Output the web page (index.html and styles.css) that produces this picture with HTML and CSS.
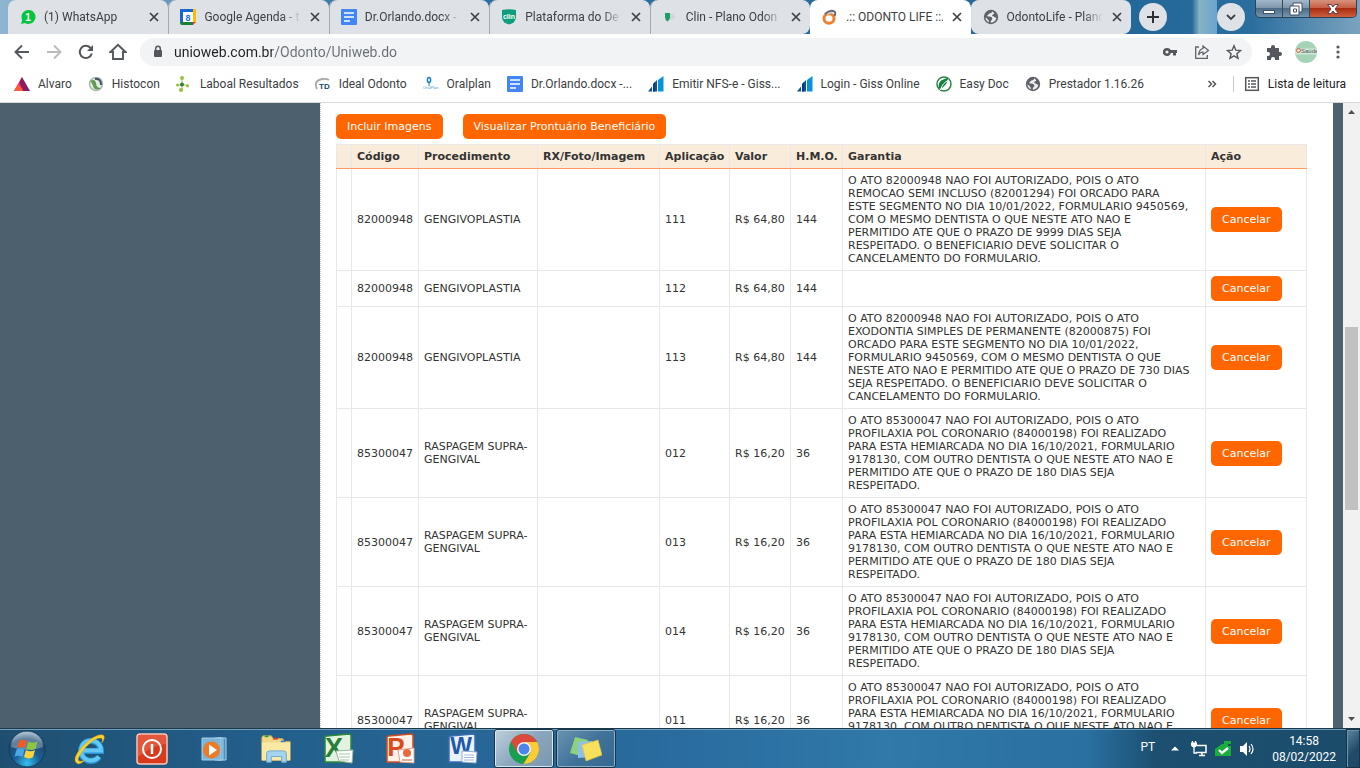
FILE: index.html
```html
<!DOCTYPE html>
<html lang="pt-BR">
<head>
  <meta charset="UTF-8" />
  <meta name="viewport" content="width=device-width, initial-scale=1.0"/>
  <title>.:: ODONTO LIFE ::.</title>
  <link rel="stylesheet" href="styles.css">
</head>
<body>
  <!-- shared shapes -->
  <svg class="defs" width="0" height="0" aria-hidden="true">
    <symbol id="docs" viewBox="0 0 16 16">
      <rect width="16" height="16" rx="1" fill="#4285f4"/>
      <path d="M3 4h10M3 8h10M3 12h6" stroke="#fff" stroke-width="1.6"/>
    </symbol>
    <symbol id="globe" viewBox="0 0 16 16">
      <circle cx="8" cy="8" r="7.2" fill="#5f6368"/>
      <path d="M9 2.500c-.2 1.600-1.200 1.800-2.500 2-.9.200-.8 1.300-1.700 1.600-.8.200-.6 1.300.2 1.500 1.700.3 3.800-.2 4.300 1.600.4 1.500-1 1.800-1.400 2.900l-.2 1.700c2.900-.2 5.300-2.300 5.700-5.100-1.700.3-2-1.200-3.600-1.400-.9-.1-.8-1.200.1-1.700l1.300-.9C10.700 3.400 10 2.700 9 2.500zM2.400 8.400c.1 1.900 1.500 3.900 3.400 4.800.4-1.300-.2-1.700-.8-2.400-.7-.8-.6-1.700-2.600-2.400z" fill="#eceef0"/>
    </symbol>
    <symbol id="giss" viewBox="0 0 16 16">
      <path d="M0 15.500l4-5v5zM5 15.500V8l4-4v11.500z" fill="#0d4fa0"/>
      <path d="M10 15.500V4l5.500-4v15.500z" fill="#0693d8"/>
      <path d="M7 6l-2 2.500v7h2z" fill="#083c80"/>
    </symbol>
    <symbol id="close" viewBox="0 0 12 12">
      <path d="M2 2l8 8M10 2l-8 8" stroke="#3c4043" stroke-width="1.700"/>
    </symbol>
  </svg>

  <header class="tabstrip">
    <nav class="tabs">
      <div class="tab first">
        <svg class="fav" viewBox="0 0 16 16"><path d="M1 15l1.200-4A7 7 0 1 1 5 14z" fill="#06c43e"/><text x="8" y="12" text-anchor="middle" font-size="10" font-weight="bold" fill="#fff">1</text></svg>
        <a href="#" class="tab-title">(1) WhatsApp</a>
        <button class="close" aria-label="Fechar"><svg><use href="#close"/></svg></button>
      </div>
      <div class="tab">
        <svg class="fav" viewBox="0 0 16 16"><path d="M0 0h13v3H3v10H0z" fill="#1967d2"/><path d="M13 0h3v13h-3z" fill="#fbbc04"/><path d="M0 13h13v3H2q-2 0-2-2z" fill="#188038"/><path d="M13 13h3l-3 3z" fill="#ea4335"/><path d="M3 3h10v10H3z" fill="#fff"/><text x="8" y="11.500" text-anchor="middle" font-size="9" font-weight="bold" fill="#1a73e8">8</text></svg>
        <a href="#" class="tab-title">Google Agenda - t</a>
        <button class="close" aria-label="Fechar"><svg><use href="#close"/></svg></button>
      </div>
      <div class="tab">
        <svg class="fav"><use href="#docs"/></svg>
        <a href="#" class="tab-title">Dr.Orlando.docx -</a>
        <button class="close" aria-label="Fechar"><svg><use href="#close"/></svg></button>
      </div>
      <div class="tab">
        <svg class="fav" viewBox="0 0 16 16"><path d="M1 1q7-1.500 14 0v8q-1 5-7 6.500Q2 14 1 9z" fill="#0c9e7c"/><text x="8" y="9.500" text-anchor="middle" font-size="7" font-weight="bold" fill="#fff">clin</text></svg>
        <a href="#" class="tab-title">Plataforma do De</a>
        <button class="close" aria-label="Fechar"><svg><use href="#close"/></svg></button>
      </div>
      <div class="tab last">
        <svg class="fav" viewBox="0 0 16 16"><path d="M3 4h5v5q-1 3-2.500 3.500Q3 11 3 8z" fill="#1e9d63"/><path d="M8 6h4M8 8h5M8 10h3" stroke="#c2c9c8"/></svg>
        <a href="#" class="tab-title">Clin - Plano Odon</a>
        <button class="close" aria-label="Fechar"><svg><use href="#close"/></svg></button>
      </div>
      <div class="tab active">
        <svg class="fav" viewBox="0 0 16 16"><ellipse cx="7" cy="9.500" rx="5" ry="4.800" fill="none" stroke="#f08030" stroke-width="3"/><path d="M3 5Q8 0 12.500 2.500q1.500 1.500 0 4.500" fill="none" stroke="#66696c" stroke-width="2"/><path d="M5 5.500q4-3 6-1" fill="none" stroke="#c5c8ca" stroke-width="1.500"/></svg>
        <a href="#" class="tab-title">.:: ODONTO LIFE ::.</a>
        <button class="close" aria-label="Fechar"><svg><use href="#close"/></svg></button>
      </div>
      <div class="tab last">
        <svg class="fav"><use href="#globe"/></svg>
        <a href="#" class="tab-title">OdontoLife - Plano</a>
        <button class="close" aria-label="Fechar"><svg><use href="#close"/></svg></button>
      </div>
    </nav>
    <button class="round" aria-label="Nova guia"><svg width="14" height="14" viewBox="0 0 14 14"><path d="M7 1v12M1 7h12" stroke="#2c3033" stroke-width="2"/></svg></button>
    <div class="glass"></div>
    <button class="round" aria-label="Pesquisar guias"><svg width="12" height="12" viewBox="0 0 12 12"><path d="M2 4l4 4 4-4" fill="none" stroke="#3c4043" stroke-width="1.800"/></svg></button>
    <div class="win-controls">
      <button aria-label="Minimizar"><svg width="14" height="12" viewBox="0 0 14 12"><rect x="1.500" y="7.500" width="11" height="3" fill="#fff" stroke="#42506a"/></svg></button>
      <button aria-label="Restaurar"><svg width="14" height="14" viewBox="0 0 14 14"><path d="M4 1h9v9h-3v3H1V4h3z" fill="#fff" stroke="#42506a"/><path d="M10 10V4H4M4.500 7h3v3h-3z" fill="none" stroke="#42506a"/></svg></button>
      <button class="win-close" aria-label="Fechar janela"><svg width="14" height="12" viewBox="0 0 14 12"><path d="M1.500 1.500h3.500l2 2.500 2-2.500h3.500L9 6l3.500 4.500H9L7 8l-2 2.500H1.500L5 6z" fill="#fff" stroke="#663c46"/></svg></button>
    </div>
  </header>

  <div class="toolbar">
    <button class="tool" aria-label="Voltar"><svg width="16" height="16" viewBox="0 0 16 16"><path d="M15 8H2M8 1.500L1.500 8 8 14.500" fill="none" stroke="#54585c" stroke-width="1.900"/></svg></button>
    <button class="tool" aria-label="Avançar"><svg width="16" height="16" viewBox="0 0 16 16"><path d="M1 8h13M8 1.500L14.500 8 8 14.500" fill="none" stroke="#babcbe" stroke-width="1.900"/></svg></button>
    <button class="tool" aria-label="Recarregar"><svg width="16" height="16" viewBox="0 0 16 16"><path d="M13.800 9.500A6.100 6.100 0 1 1 12.300 3.700L14 5.500" fill="none" stroke="#54585c" stroke-width="2"/><path d="M15 1v6H9z" fill="#54585c"/></svg></button>
    <button class="tool" aria-label="Página inicial"><svg width="18" height="18" viewBox="0 0 18 18"><path d="M1.500 9L9 1.800 16.500 9H14v7H4V9z" fill="none" stroke="#54585c" stroke-width="1.900"/></svg></button>
    <div class="omnibox">
      <svg width="10" height="14" viewBox="0 0 10 14"><rect y="5" x="1" width="8" height="7" rx="1" fill="#54585c"/><path d="M2.700 6V3.500a2.300 2.300 0 0 1 4.600 0V6" fill="none" stroke="#54585c" stroke-width="1.500"/></svg>
      <input type="text" class="url" aria-label="Endereço" value="unioweb.com.br/Odonto/Uniweb.do">
      <button class="tool" aria-label="Senhas"><svg width="16" height="16" viewBox="0 0 16 16"><path fill-rule="evenodd" d="M5 4a4 4 0 1 0 3.800 5H11v2.500h3V9h1V6H8.800A4 4 0 0 0 5 4zm0 2.400a1.600 1.600 0 1 1 0 3.200 1.600 1.600 0 0 1 0-3.200z" fill="#54585c"/></svg></button>
      <button class="tool" aria-label="Compartilhar"><svg width="16" height="16" viewBox="0 0 16 16"><path d="M5 3H1.700v11.300h11.600V11" fill="none" stroke="#5f6368" stroke-width="1.300"/><path d="M9 2l5.500 4.500L9 10.500V8q-3 0-4.500 3Q5 5.500 9 4.500z" fill="none" stroke="#5f6368" stroke-width="1.200"/></svg></button>
      <button class="tool" aria-label="Favoritar"><svg width="16" height="16" viewBox="0 0 16 16"><path d="M8 1.800l1.800 4.400 4.700.4-3.600 3.100 1.100 4.600L8 11.800l-4 2.500 1.100-4.600L1.500 6.600l4.700-.4z" fill="none" stroke="#54585c" stroke-width="1.400"/></svg></button>
    </div>
    <button class="tool" aria-label="Extensões"><svg width="16" height="16" viewBox="0 0 16 16"><path d="M1 4h4V3a2 2 0 0 1 4 0v1h4v4h1a2 2 0 0 1 0 4h-1v4H9v-1a2 2 0 0 0-4 0v1H1v-4h1a2 2 0 0 0 0-4H1z" fill="#54585c"/></svg></button>
    <button class="tool" aria-label="Perfil"><svg width="22" height="22" viewBox="0 0 22 22"><circle cx="11" cy="11" r="11" fill="#a5d3b8"/><path d="M1 7.500h20l1 3.500-1 2.500H1L0 11z" fill="#d4e8dc"/><circle cx="3.500" cy="9.500" r="2" fill="none" stroke="#d0604a"/><text x="6" y="12" font-size="6" fill="#4a5a50">Saúde</text></svg></button>
    <button class="tool" aria-label="Menu"><svg width="16" height="16" viewBox="0 0 16 16"><circle cx="8" cy="3" r="1.600" fill="#54585c"/><circle cx="8" cy="8" r="1.600" fill="#54585c"/><circle cx="8" cy="13" r="1.600" fill="#54585c"/></svg></button>
  </div>

  <nav class="bookmarks">
    <a href="#"><svg viewBox="0 0 16 16"><path d="M8 1v14H0z" fill="#f2246a"/><path d="M0 15l4-7 6 7z" fill="#ff5a3c"/><path d="M8 1l8 14H9L5.500 6z" fill="#8c1a5e"/></svg>Alvaro</a>
    <a href="#"><svg viewBox="0 0 16 16"><circle cx="8" cy="8" r="6.500" fill="#e6ebe6" stroke="#aeb8b4" stroke-width="1.500"/><path d="M2 5q5-3 6 2 0 5 5 5-6 4-8-2-.5-3-3-5z" fill="#5f9b52"/><path d="M7 3q6-1 6 6" fill="none" stroke="#4a5868" stroke-width="2"/></svg>Histocon</a>
    <a href="#"><svg viewBox="0 0 16 16"><path d="M6 2v12M1 9h12" stroke="#9cc93c"/><circle cx="6" cy="2" r="2" fill="#98c234"/><circle cx="6" cy="8.500" r="2" fill="#2f7d43"/><circle cx="5" cy="14" r="2" fill="#98c234"/><circle cx="1.500" cy="9" r="1.500" fill="#98c234"/><circle cx="11.500" cy="10" r="1.500" fill="#98c234"/></svg>Laboal Resultados</a>
    <a href="#"><svg viewBox="0 0 16 16"><path d="M2 13Q-2 5 7 3q5-.5 7 1" fill="none" stroke="#a7aaad" stroke-width="1.800"/><text x="4" y="13" font-size="8" font-weight="bold" fill="#164c70">TD</text></svg>Ideal Odonto</a>
    <a href="#"><svg viewBox="0 0 16 16"><ellipse cx="6" cy="4" rx="1.600" ry="2.500" fill="none" stroke="#1684c4" stroke-width="1.500"/><path d="M6 7v3" stroke="#1684c4"/><text x="0" y="13" font-size="4" fill="#4a9cd0">OralPlan</text></svg>Oralplan</a>
    <a href="#"><svg><use href="#docs"/></svg>Dr.Orlando.docx -...</a>
    <a href="#"><svg><use href="#giss"/></svg>Emitir NFS-e - Giss...</a>
    <a href="#"><svg><use href="#giss"/></svg>Login - Giss Online</a>
    <a href="#"><svg viewBox="0 0 16 16"><circle cx="8" cy="8" r="7" fill="#fff" stroke="#2c8548" stroke-width="1.500"/><path d="M3 12Q1 4 12 2q0 7-8 11z" fill="#168040"/><path d="M4.500 14Q6 7 13 4" fill="none" stroke="#fff"/></svg>Easy Doc</a>
    <a href="#"><svg><use href="#globe"/></svg>Prestador 1.16.26</a>
    <button class="more" aria-label="Mais favoritos"><svg width="10" height="10" viewBox="0 0 10 10"><path d="M1.500 2l3 3-3 3M5.500 2l3 3-3 3" fill="none" stroke="#54585c" stroke-width="1.500"/></svg></button>
    <a href="#" class="reading"><svg viewBox="0 0 16 16"><rect x="1.700" y="1.700" width="12.600" height="12.600" fill="none" stroke="#54585c" stroke-width="1.500"/><path d="M4 5h2M7 5h5M4 8h2M7 8h5M4 11h2M7 11h5" stroke="#54585c" stroke-width="1.400"/></svg>Lista de leitura</a>
  </nav>

  <div class="viewport">
    <main class="panel">
      <div class="actions">
        <button class="btn">Incluir Imagens</button>
        <button class="btn">Visualizar Prontuário Beneficiário</button>
      </div>
      <table class="grid">
        <colgroup>
          <col class="c-mark"><col class="c-code"><col class="c-proc"><col class="c-image"><col class="c-apply"><col class="c-value"><col class="c-hmo"><col><col class="c-action">
        </colgroup>
        <thead>
          <tr><th></th><th>Código</th><th>Procedimento</th><th>RX/Foto/Imagem</th><th>Aplicação</th><th>Valor</th><th>H.M.O.</th><th>Garantia</th><th>Ação</th></tr>
        </thead>
        <tbody>
          <tr>
            <td></td><td>82000948</td><td>GENGIVOPLASTIA</td><td></td><td>111</td><td>R$ 64,80</td><td>144</td>
            <td>O ATO 82000948 NAO FOI AUTORIZADO, POIS O ATO<br>REMOCAO SEMI INCLUSO (82001294) FOI ORCADO PARA<br>ESTE SEGMENTO NO DIA 10/01/2022, FORMULARIO 9450569,<br>COM O MESMO DENTISTA O QUE NESTE ATO NAO E<br>PERMITIDO ATE QUE O PRAZO DE 9999 DIAS SEJA<br>RESPEITADO. O BENEFICIARIO DEVE SOLICITAR O<br>CANCELAMENTO DO FORMULARIO.</td>
            <td><button class="btn">Cancelar</button></td>
          </tr>
          <tr>
            <td></td><td>82000948</td><td>GENGIVOPLASTIA</td><td></td><td>112</td><td>R$ 64,80</td><td>144</td>
            <td></td>
            <td><button class="btn">Cancelar</button></td>
          </tr>
          <tr>
            <td></td><td>82000948</td><td>GENGIVOPLASTIA</td><td></td><td>113</td><td>R$ 64,80</td><td>144</td>
            <td>O ATO 82000948 NAO FOI AUTORIZADO, POIS O ATO<br>EXODONTIA SIMPLES DE PERMANENTE (82000875) FOI<br>ORCADO PARA ESTE SEGMENTO NO DIA 10/01/2022,<br>FORMULARIO 9450569, COM O MESMO DENTISTA O QUE<br>NESTE ATO NAO E PERMITIDO ATE QUE O PRAZO DE 730 DIAS<br>SEJA RESPEITADO. O BENEFICIARIO DEVE SOLICITAR O<br>CANCELAMENTO DO FORMULARIO.</td>
            <td><button class="btn">Cancelar</button></td>
          </tr>
          <tr>
            <td></td><td>85300047</td><td>RASPAGEM SUPRA-GENGIVAL</td><td></td><td>012</td><td>R$ 16,20</td><td>36</td>
            <td>O ATO 85300047 NAO FOI AUTORIZADO, POIS O ATO<br>PROFILAXIA POL CORONARIO (84000198) FOI REALIZADO<br>PARA ESTA HEMIARCADA NO DIA 16/10/2021, FORMULARIO<br>9178130, COM OUTRO DENTISTA O QUE NESTE ATO NAO E<br>PERMITIDO ATE QUE O PRAZO DE 180 DIAS SEJA<br>RESPEITADO.</td>
            <td><button class="btn">Cancelar</button></td>
          </tr>
          <tr>
            <td></td><td>85300047</td><td>RASPAGEM SUPRA-GENGIVAL</td><td></td><td>013</td><td>R$ 16,20</td><td>36</td>
            <td>O ATO 85300047 NAO FOI AUTORIZADO, POIS O ATO<br>PROFILAXIA POL CORONARIO (84000198) FOI REALIZADO<br>PARA ESTA HEMIARCADA NO DIA 16/10/2021, FORMULARIO<br>9178130, COM OUTRO DENTISTA O QUE NESTE ATO NAO E<br>PERMITIDO ATE QUE O PRAZO DE 180 DIAS SEJA<br>RESPEITADO.</td>
            <td><button class="btn">Cancelar</button></td>
          </tr>
          <tr>
            <td></td><td>85300047</td><td>RASPAGEM SUPRA-GENGIVAL</td><td></td><td>014</td><td>R$ 16,20</td><td>36</td>
            <td>O ATO 85300047 NAO FOI AUTORIZADO, POIS O ATO<br>PROFILAXIA POL CORONARIO (84000198) FOI REALIZADO<br>PARA ESTA HEMIARCADA NO DIA 16/10/2021, FORMULARIO<br>9178130, COM OUTRO DENTISTA O QUE NESTE ATO NAO E<br>PERMITIDO ATE QUE O PRAZO DE 180 DIAS SEJA<br>RESPEITADO.</td>
            <td><button class="btn">Cancelar</button></td>
          </tr>
          <tr>
            <td></td><td>85300047</td><td>RASPAGEM SUPRA-GENGIVAL</td><td></td><td>011</td><td>R$ 16,20</td><td>36</td>
            <td>O ATO 85300047 NAO FOI AUTORIZADO, POIS O ATO<br>PROFILAXIA POL CORONARIO (84000198) FOI REALIZADO<br>PARA ESTA HEMIARCADA NO DIA 16/10/2021, FORMULARIO<br>9178130, COM OUTRO DENTISTA O QUE NESTE ATO NAO E<br>PERMITIDO ATE QUE O PRAZO DE 180 DIAS SEJA<br>RESPEITADO.</td>
            <td><button class="btn">Cancelar</button></td>
          </tr>
        </tbody>
      </table>
    </main>
    <div class="scrollbar">
      <svg viewBox="0 0 17 17"><path d="M5 11h7L8.500 7z" fill="#505050"/></svg>
      <div class="space-before"></div>
      <div class="thumb"></div>
      <div class="space-after"></div>
      <svg viewBox="0 0 17 17"><path d="M5 6h7L8.500 10z" fill="#505050"/></svg>
    </div>
  </div>

  <footer class="taskbar">
    <button class="start" aria-label="Iniciar">
      <svg width="38" height="38" viewBox="0 0 38 38">
        <defs>
          <radialGradient id="orb" cx=".5" cy=".9" r=".9"><stop offset="0" stop-color="#35c0ee"/><stop offset=".4" stop-color="#1a5f96"/><stop offset=".75" stop-color="#20486c"/><stop offset="1" stop-color="#a9c3d6"/></radialGradient>
        </defs>
        <circle cx="19" cy="19" r="18" fill="url(#orb)" stroke="#153c58"/>
        <path d="M3 17a16 15 0 0 1 32 0q-16 6-32 0z" fill="#d7e6f0" opacity=".35"/>
        <path d="M11 11q4-2.500 8 0l-2 7q-4-2-8 0z" fill="#ee5a28"/>
        <path d="M20.500 11.500q4 2.500 9 0l-2 7.500q-5 2-9-.5z" fill="#8cc63e"/>
        <path d="M8.500 19.500q4-2 8 .3l-2 7q-4-2-8 0z" fill="#4aa8e8"/>
        <path d="M18 20q4 2.500 9 .3l-2 7q-4 2.300-9-.3z" fill="#ffd23c"/>
      </svg>
    </button>
    <div class="apps">
      <button aria-label="Internet Explorer"><svg viewBox="0 0 32 32">
        <path d="M8 18h19a10 10 0 1 0-2 6" fill="none" stroke="#2a94d8" stroke-width="6"/>
        <path d="M8 17.500h19a10 10 0 1 0-2 6" fill="none" stroke="#62c8f5" stroke-width="4"/>
        <path d="M4 31Q-4 27 9 13 22 0 29 2q3 2-1 8 1-5-1-5Q21 4 11 15 2 26 5 28q3 1 6-1-4 4-7 4z" fill="#fbd22c" stroke="#d29f16" stroke-width=".5"/></svg></button>
      <button aria-label="Desligar"><svg viewBox="0 0 32 32"><rect x="1" y="1" width="30" height="30" rx="3" fill="#d83a1e" stroke="#f6c8bc" stroke-width="1.500"/><path d="M2 2h28v9Q15 13 2 24z" fill="#ee735a" opacity=".5"/><circle cx="16" cy="16" r="9" fill="none" stroke="#fff" stroke-width="2"/><path d="M16 11v10" stroke="#fff" stroke-width="2.500"/></svg></button>
      <button aria-label="Media Player"><svg viewBox="0 0 32 32"><path d="M20 5h8v22h-8z" fill="#4a90bd" stroke="#a7d0e8"/><path d="M17 5h8v22h-8z" fill="#5ca4cf" stroke="#a7d0e8"/><path d="M4 5h19v22H4z" fill="#7cb5d8" stroke="#a6d0e8"/><circle cx="13.500" cy="17" r="8.500" fill="#f07a22"/><path d="M11 11.500l8 5.500-8 5.500z" fill="#fff"/></svg></button>
      <button aria-label="Explorador"><svg viewBox="0 0 34 32"><path d="M2 4q0-2 2-2h8l2 3h10l2 3h6v20H2z" fill="#f3d985" stroke="#cfa94e"/><path d="M5 2.500h4" stroke="#28a048" stroke-width="2"/><path d="M14 5h5" stroke="#d04030" stroke-width="2"/><path d="M22 8h5" stroke="#2c82d0" stroke-width="2"/><path d="M2 9h30v19H2z" fill="#fae8a6"/><path d="M7 30V21q0-3 3-3h15q3 0 3 3v9h-5v-6H12v6z" fill="#a4d4ee" stroke="#6faacf"/></svg></button>
      <button aria-label="Excel"><svg viewBox="0 0 32 32"><path d="M3 4q0-1 2-1l22-2q2 0 2 2v26H3z" fill="#e4f3df" stroke="#278a38" stroke-width="1.500"/><text x="12" y="24" text-anchor="middle" font-size="27" font-weight="bold" fill="#27803a">X</text><path d="M14 18l17-1-1 13-13-2z" fill="#fff" stroke="#9ab59c"/><path d="M17 21h11M17 24h11M18 27h9" stroke="#a7c8aa"/></svg></button>
      <button aria-label="PowerPoint"><svg viewBox="0 0 32 32"><path d="M3 4q0-1 2-1l22-2q2 0 2 2v26H3z" fill="#fff0e8" stroke="#d04c20" stroke-width="1.500"/><text x="12" y="23" text-anchor="middle" font-size="26" font-weight="bold" fill="#d84c1c">P</text><path d="M14 17l16-2v15l-14-1z" fill="#fff" stroke="#e0a48c"/><circle cx="23" cy="20" r="4" fill="#e8693c"/><path d="M18 27h10" stroke="#e09070" stroke-width="1.500"/></svg></button>
      <button aria-label="Word"><svg viewBox="0 0 32 32"><path d="M3 4q0-1 2-1l22-2q2 0 2 2v26H3z" fill="#eaf1fb" stroke="#3a6cb4" stroke-width="1.500"/><text x="15" y="21" text-anchor="middle" font-size="23" font-weight="bold" fill="#2058ac">W</text><path d="M16 18l15 1-1 11-14-1z" fill="#fff" stroke="#96aed0"/><path d="M18 22h10M18 24.500h10M18 27h10" stroke="#9ab8dc"/></svg></button>
      <button class="open current" aria-label="Chrome"><svg viewBox="0 0 32 32"><circle cx="16" cy="16" r="15" fill="#189f50"/><path d="M16 16L3 8.500A15 15 0 0 1 29 8.500z" fill="#dd4a3c"/><path d="M16 9h13.300A15 15 0 0 1 15.500 31l7-11.500z" fill="#fdcb36"/><path d="M3 8.500L9.500 20 16 9z" fill="#dd4a3c"/><circle cx="16" cy="16" r="7" fill="#f3f5f4"/><circle cx="16" cy="16" r="5.500" fill="#4a86ee"/></svg></button>
      <button class="open" aria-label="Notas autoadesivas"><svg viewBox="0 0 32 32"><path d="M5 4l13 3-4 17L0 20z" fill="#8cd27c"/><path d="M8 9l14-1 1 16-15 1z" fill="#8cc0ee"/><path d="M12 12l16-5 4 15-16 6z" fill="#f7e15c" stroke="#e0c440" stroke-width=".6"/></svg></button>
    </div>
    <div class="tray">
      <span class="lang">PT</span>
      <button aria-label="Ícones ocultos"><svg width="8" height="5" viewBox="0 0 8 5"><path d="M0 4.500L4 .5l4 4z" fill="#fff"/></svg></button>
      <svg width="16" height="16" viewBox="0 0 16 16"><path d="M6 4.500h9v7H5M8 14.500h6M11 12v2" fill="none" stroke="#fff" stroke-width="1.500"/><path d="M0 1.500h6v3q-1 2-3 2t-3-2z" fill="#fff"/><path d="M1.500 0v2M4.500 0v2M3 6v6h3" fill="none" stroke="#fff" stroke-width="1.300"/></svg>
      <svg width="16" height="16" viewBox="0 0 16 16"><path d="M0 8l7-5h2V0h7v3h-3v2h3v10H0z" fill="#19ae3c"/><path d="M4 9l3 3 6-5" fill="none" stroke="#fff" stroke-width="2.300"/></svg>
      <svg width="16" height="16" viewBox="0 0 16 16"><path d="M1 5h3l4-4v14l-4-4H1z" fill="#fff"/><path d="M10 5q2 3 0 6M12 3q4 5 0 10" fill="none" stroke="#fff" stroke-width="1.200"/></svg>
    </div>
    <div class="clock"><span>14:58</span><span>08/02/2022</span></div>
    <button class="show-desktop" aria-label="Mostrar área de trabalho"></button>
  </footer>
</body>
</html>
```
FILE: styles.css
```css
* {
  box-sizing: border-box;
}
body {
  margin: 0;
  height: 100vh;
  display: flex;
  flex-direction: column;
  overflow: hidden;
  background: #fff;
  color: #3c4043;
  font: 12px/16px Roboto, "Open Sans", sans-serif;
}
button {
  border: 0;
  padding: 0;
  background: none;
  font: inherit;
  color: inherit;
  display: flex;
  align-items: center;
  justify-content: center;
  cursor: pointer;
}
a {
  color: inherit;
  text-decoration: none;
}
svg {
  flex: none;
  font-family: "Liberation Sans", Arial, sans-serif;
}
.defs {
  position: absolute;
}

/* tabs */
.tabstrip {
  display: flex;
  flex: none;
  height: 34px;
  padding: 0 3px 0 8px;
  background: linear-gradient(90deg, #8fb5d0, #2b6f9f 30%, #24689a 85%, #2a6e9e 92%, #7ba3bf);
}
.tabs {
  display: flex;
  flex: 0 1 1123px;
  min-width: 0;
}
.tab {
  flex: 1 1 0;
  min-width: 0;
  display: flex;
  align-items: center;
  gap: 8px;
  padding: 0 8px 0 12px;
  background: #dee1e6;
  border-radius: 8px 8px 0 0;
}
.tab + .tab {
  box-shadow: inset 1px 0 #a5a8ad;
}
.tab.last {
  border-radius: 8px 8px 8px 0;
}
.tab.active {
  background: #fff;
  box-shadow: none;
}
.tab.active + .tab {
  box-shadow: none;
  border-radius: 8px;
}
.fav {
  width: 16px;
  height: 16px;
}
.tab-title {
  flex: 1;
  overflow: hidden;
  white-space: nowrap;
  -webkit-mask-image: linear-gradient(90deg, #000 80%, transparent);
  mask-image: linear-gradient(90deg, #000 80%, transparent);
}
.active .tab-title {
  -webkit-mask-image: none;
  mask-image: none;
}
.close svg {
  width: 12px;
  height: 12px;
}
.round {
  width: 28px;
  height: 28px;
  margin: 3px 0 0 8px;
  border-radius: 50%;
  background: #dee1e6;
}
.glass {
  flex: 1;
  background: linear-gradient(90deg, transparent 50%, #86b2c4 65%, #6ca4cd);
}
.round + .glass + .round {
  margin: 3px 10px 0 0;
}
.win-controls {
  display: flex;
  height: 18px;
  border: 1px solid #2a4358;
  border-top: 0;
  border-radius: 0 0 5px 5px;
  overflow: hidden;
  background: linear-gradient(#a2b9cb, #7c93a8 50%, #4d6c86 50%, #7596af);
}
.win-controls button {
  width: 27px;
  border-right: 1px solid #304a60;
}
.win-controls .win-close {
  width: 46px;
  border-right: 0;
  background: linear-gradient(#d8937f, #c5593f 50%, #a92c12 50%, #cc5f3c);
}

/* address bar */
.toolbar {
  display: flex;
  align-items: center;
  flex: none;
  height: 36px;
  padding: 0 6px;
}
.tool {
  width: 32px;
  height: 28px;
}
.omnibox {
  flex: 1;
  display: flex;
  align-items: center;
  height: 28px;
  margin: 0 6px;
  padding: 0 2px 0 13px;
  border-radius: 14px;
  background: #f1f3f4;
}
.url {
  flex: 1;
  min-width: 0;
  height: 24px;
  margin-left: 11px;
  padding: 0;
  border: 0;
  outline: 0;
  font: 14px/20px Roboto, "Open Sans", sans-serif;
  color: transparent;
  /* the domain is darker than the path */
  background: linear-gradient(90deg, #202124 7em, #6a6e73 7em);
  -webkit-background-clip: text;
  background-clip: text;
}

/* bookmarks */
.bookmarks {
  display: flex;
  align-items: center;
  flex: none;
  gap: 16px;
  height: 33px;
  padding: 0 14px 4px;
  border-bottom: 1px solid #d8dadc;
  white-space: nowrap;
}
.bookmarks a {
  display: flex;
  align-items: center;
  gap: 8px;
}
.bookmarks a svg {
  width: 16px;
  height: 16px;
}
.more {
  margin-left: auto;
}
.bookmarks .reading {
  padding-left: 10px;
  border-left: 1px solid #c8cacc;
  color: #202124;
}

/* page */
.viewport {
  flex: 1;
  min-height: 0;
  display: flex;
  overflow: hidden;
  padding-left: 320px;
  background: #4d606e;
  color: #333;
  font: 11px/13px Verdana, "DejaVu Sans", sans-serif;
}
.panel {
  flex: 1;
  min-width: 0;
  margin-right: 10px;
  padding: 11px 26px 0 15px;
  border-left: 1px dotted #ccc;
  background: #fff;
}
.actions {
  display: flex;
  gap: 20px;
  margin-bottom: 5px;
}
.btn {
  height: 25px;
  padding: 0 11px;
  border-radius: 5px;
  background: #f60;
  color: #fff;
}
.grid {
  width: 100%;
  table-layout: fixed;
  border-collapse: collapse;
}
.grid th,
.grid td {
  padding: 5px;
  border: 1px solid #e8e8e8;
  text-align: left;
}
.grid th {
  background: #faecdb;
  border-bottom-color: #ff9966;
  white-space: nowrap;
}
.c-mark { width: 15px; }
.c-code { width: 67px; }
.c-proc { width: 119px; }
.c-image { width: 122px; }
.c-apply { width: 70px; }
.c-value { width: 61px; }
.c-hmo { width: 52px; }
.c-action { width: 101px; }

.scrollbar {
  width: 17px;
  display: flex;
  flex-direction: column;
  background: #f1f1f1;
}
.scrollbar svg {
  width: 17px;
  height: 17px;
}
.space-before { flex: 35; }
.space-after { flex: 34; }
.thumb {
  flex: 31;
  margin: 0 2px;
  background: #c1c1c1;
}

/* taskbar */
.taskbar {
  display: flex;
  flex: none;
  height: 40px;
  border-top: 1px solid #1d3849;
  box-shadow: inset 0 1px #6f9fbe;
  background: linear-gradient(90deg, #1f4f70, #235f8c 20%, #2a6c9f 50%, #3079a9 65%, #2a70a0 80%, #1c4f70 85%, #1b4c6a);
  color: #fff;
}
.start {
  width: 60px;
  padding-right: 6px;
}
.apps {
  flex: 1;
  display: flex;
  gap: 2px;
}
.apps button {
  width: 60px;
}
.apps svg {
  width: 32px;
  height: 32px;
}
.apps .open {
  border: 1px solid #15354c;
  border-radius: 3px;
  box-shadow: inset 0 0 0 1px #8fb1c8;
  background: linear-gradient(135deg, #6b93b0, #41739a 50%, #336890);
}
.apps .current {
  box-shadow: inset 0 0 0 1px #dce8f0;
  background: linear-gradient(135deg, #c0d0dc, #8ba7bd 50%, #7897b0);
}
.tray {
  display: flex;
  align-items: center;
  gap: 8px;
  padding-right: 17px;
}
.lang {
  margin-right: 8px;
  padding-bottom: 4px;
}
.tray button {
  margin-right: 4px;
}
.clock {
  display: flex;
  flex-direction: column;
  align-items: center;
  justify-content: center;
  margin-right: 10px;
}
.show-desktop {
  width: 14px;
  border: 1px solid #17354a;
  box-shadow: inset 1px 1px #6c93ae;
  background: linear-gradient(135deg, #5c86a2, #1f4b68 60%);
}
```
